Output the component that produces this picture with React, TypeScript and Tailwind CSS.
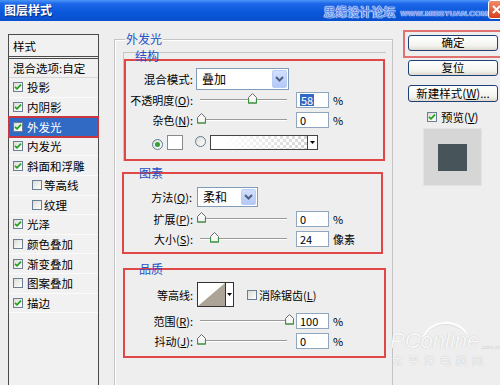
import React from "react";

function Check({ checked }: { checked: boolean }) {
  return (
    <span className="inline-flex w-[10px] h-[10px] shrink-0 items-center justify-center border border-[#6a7f94] bg-[linear-gradient(135deg,#dcdcd6,#ffffff)]">
      {checked && (
        <svg width="8" height="8" viewBox="0 0 8 8">
          <path d="M1 3.8 L3 5.8 L7 1.6" stroke="#21a121" strokeWidth="1.7" fill="none" />
        </svg>
      )}
    </span>
  );
}

function Radio({ on }: { on: boolean }) {
  return (
    <span className="inline-flex w-[11px] h-[11px] shrink-0 rounded-full border border-[#5e7a94] bg-[linear-gradient(135deg,#dcdcd6,#ffffff)] items-center justify-center">
      {on && <span className="w-[5px] h-[5px] rounded-full bg-[#35a035]" />}
    </span>
  );
}

function Thumb({ pos }: { pos: number }) {
  return (
    <svg className="absolute top-[3px]" style={{ left: pos - 4 }} width="9" height="11" viewBox="0 0 9 11">
      <polygon points="0.5,4.5 4.5,0.5 8.5,4.5 8.5,10 0.5,10" fill="#f6f6f6" stroke="#6b6b6b" strokeWidth="1" />
      <polyline points="0.5,6 0.5,10 8.5,10 8.5,6" fill="none" stroke="#2f9a2f" strokeWidth="1.2" />
    </svg>
  );
}

function Slider({ pos }: { pos: number }) {
  return (
    <div className="relative w-[87px] h-[20px] shrink-0">
      <div className="absolute left-0 right-0 top-[9px] h-[2px] border-t border-[#9a9a9a] bg-white" />
      <Thumb pos={pos} />
    </div>
  );
}

function NumBox({ v, hi }: { v: string; hi?: boolean }) {
  return (
    <div className="ml-[9px] w-[33px] h-[16px] shrink-0 border border-[#8fa6bd] bg-white flex items-center pl-[3px] leading-[12px]">
      {hi ? <span className="bg-[#316ac5] text-white px-[1px]">{v}</span> : <span>{v}</span>}
    </div>
  );
}

function U({ c }: { c: string }) {
  return <span className="underline">{c}</span>;
}

function SliderRow({
  label,
  lw,
  pos,
  v,
  unit,
  hi,
}: {
  label: React.ReactNode;
  lw: string;
  pos: number;
  v: string;
  unit: string;
  hi?: boolean;
}) {
  return (
    <div className="flex items-center h-[20px]">
      <div className={`${lw} text-right shrink-0 whitespace-nowrap`}>{label}</div>
      <div className="ml-[7px]">
        <Slider pos={pos} />
      </div>
      <NumBox v={v} hi={hi} />
      <span className="ml-[4px] whitespace-nowrap">{unit}</span>
    </div>
  );
}

function Chevron() {
  return (
    <svg width="9" height="6" viewBox="0 0 9 6">
      <polyline points="1,1 4.5,4.5 8,1" fill="none" stroke="#4d6185" strokeWidth="2" />
    </svg>
  );
}

function Select({ text, w, h }: { text: string; w: string; h: string }) {
  return (
    <div className={`${w} ${h} shrink-0 flex border border-[#7f9db9] bg-white`}>
      <div className="flex-1 flex items-center pl-[5px] text-[12px]">{text}</div>
      <div className="w-[15px] m-[1px] rounded-[2px] border border-[#b9cdf6] bg-[linear-gradient(#d3e0fd,#b3c8f6)] flex items-center justify-center">
        <Chevron />
      </div>
    </div>
  );
}

function TinyArrow() {
  return (
    <svg width="5" height="3" viewBox="0 0 5 3">
      <polygon points="0,0 5,0 2.5,3" fill="#000" />
    </svg>
  );
}

function Btn({ children, h }: { children: React.ReactNode; h: string }) {
  return (
    <div
      className={`w-[90px] ${h} rounded-[3px] border border-[#1f3f7a] bg-[linear-gradient(#ffffff,#f3f3ee_70%,#dcd8cc)] flex items-center justify-center text-[11.5px] leading-none whitespace-nowrap`}
    >
      {children}
    </div>
  );
}

const listItems = [
  { t: "投影", c: true },
  { t: "内阴影", c: true },
  { t: "外发光", c: true, sel: true },
  { t: "内发光", c: true },
  { t: "斜面和浮雕", c: true },
  { t: "等高线", c: false, ind: true },
  { t: "纹理", c: false, ind: true },
  { t: "光泽", c: true },
  { t: "颜色叠加", c: false },
  { t: "渐变叠加", c: true },
  { t: "图案叠加", c: false },
  { t: "描边", c: true },
];

export default function App() {
  return (
    <div className="w-[500px] h-[385px] overflow-hidden relative bg-[#eeeeee] flex flex-col text-[11px] leading-[14px] text-black font-['Noto_Sans_CJK_SC','Noto_Sans',sans-serif]">
      {/* Title bar */}
      <div className="h-[21px] shrink-0 flex items-start bg-[linear-gradient(to_bottom,#4a95f7_0%,#1d66e8_18%,#0a57da_60%,#0a4fce_100%)]">
        <div className="pl-[4px] pt-[3px] text-white font-bold text-[12px] [text-shadow:1px_1px_0_#0a2a80]">图层样式</div>
        <div className="flex-1" />
        <div className="flex items-end h-[20px] pb-[1px]">
          <span className="text-[12px] leading-[14px] font-bold text-[#5a8cf0] [text-shadow:0_0_1px_#fff,0_0_1px_#fff,0_0_1px_#fff]">思缘设计论坛</span>
          <span className="ml-[5px] mb-[1px] text-[8px] leading-[9px] font-bold text-[#5a8cf0] font-['Liberation_Sans',sans-serif] [text-shadow:0_0_1px_#fff,0_0_1px_#fff]">
            WWW.MISSYUAN.COM
          </span>
        </div>
        <div className="w-[17px] h-[19px] shrink-0 mr-[-5px] rounded-[3px] border border-white bg-[linear-gradient(#f08a6a,#d9401c)] flex items-center justify-center">
          <svg width="9" height="9" viewBox="0 0 9 9">
            <path d="M1 1 L8 8 M8 1 L1 8" stroke="#fff" strokeWidth="2" />
          </svg>
        </div>
      </div>

      {/* Body */}
      <div className="flex flex-1 min-h-0">
        {/* Left styles list */}
        <div className="ml-[8px] mt-[13px] w-[91px] shrink-0 border-x border-t border-[#4a4a4a] bg-[#f1f1f1] flex flex-col">
          <div className="h-[21px] flex items-center pl-[4px] text-[11.5px]">样式</div>
          <div className="h-[3px] border-y border-[#4a4a4a]" />
          <div className="h-[19px] flex items-center pl-[4px] border-b border-[#d8d8d8] whitespace-nowrap text-[11.5px]">混合选项:自定</div>
          {listItems.map((it) => (
            <div
              key={it.t}
              className={`h-[19.6px] flex items-center whitespace-nowrap text-[11.5px] ${
                it.sel
                  ? "bg-[#316ac5] text-white outline-2 outline-[#c8363e] -outline-offset-1"
                  : "border-b border-[#fbfbfb]"
              } ${it.ind ? "pl-[23px]" : "pl-[4px]"}`}
            >
              <Check checked={it.c} />
              <span className={it.ind ? "ml-[2px]" : "ml-[4px]"}>{it.t}</span>
            </div>
          ))}
        </div>

        {/* Main frame 外发光 */}
        <div className="ml-[15px] mt-[18px] w-[279px] shrink-0 relative border-l border-t border-r border-[#c4c4c4] [box-shadow:inset_1px_1px_0_#fff]">
          <div className="absolute left-[10px] top-[-9px] px-[1px] bg-[#eeeeee] text-[#2451c8] text-[12px] leading-[15px]">外发光</div>

          {/* 结构 */}
          <div className="mt-[12px] ml-[8px] w-[263px] relative border-l border-t border-[#c4c4c4]">
            <div className="absolute left-[10px] top-[-4px] z-10 px-[1px] text-[#2451c8] text-[12px] leading-[13px]">结构</div>
            <div className="mt-[6px] w-[261px] h-[102px] border-2 border-[#e04848] flex flex-col">
              <div className="mt-[7px] h-[22px] flex items-center">
                <div className="w-[67px] text-right text-[11.5px]">混合模式:</div>
                <div className="ml-[3px]">
                  <Select text="叠加" w="w-[93px]" h="h-[22px]" />
                </div>
              </div>
              <SliderRow label={<>不透明度(<U c="O" />):</>} lw="w-[67px]" pos={52} v="58" unit="%" hi />
              <SliderRow label={<>杂色(<U c="N" />):</>} lw="w-[67px]" pos={1} v="0" unit="%" />
              <div className="mt-[2px] h-[20px] flex items-center">
                <div className="ml-[26px]">
                  <Radio on />
                </div>
                <div className="ml-[4px] w-[16px] h-[15px] border border-[#8a8a8a] bg-white" />
                <div className="ml-[12px]">
                  <Radio on={false} />
                </div>
                <div className="ml-[4px] w-[108px] h-[15px] border border-[#444] flex">
                  <div className="flex-1 [background:linear-gradient(to_right,#fff_15%,rgba(255,255,255,0))_0_0/100%_100%,repeating-conic-gradient(#d4d4d4_0_25%,#ffffff_0_50%)_0_0/6px_6px]" />
                  <div className="w-[10px] border-l border-[#444] bg-white flex items-center justify-center">
                    <TinyArrow />
                  </div>
                </div>
              </div>
            </div>
          </div>

          {/* 图素 */}
          <div className="mt-[11px] ml-[7px] w-[261px] h-[82px] relative border-2 border-[#e04848] flex flex-col">
            <div className="absolute left-[15px] top-[-8px] text-[#2451c8] text-[12px] leading-[14px]">图素</div>
            <div className="mt-[13px] h-[20px] flex items-center">
              <div className="w-[68px] text-right whitespace-nowrap">方法(<U c="Q" />):</div>
              <div className="ml-[5px]">
                <Select text="柔和" w="w-[61px]" h="h-[20px]" />
              </div>
            </div>
            <div className="mt-[2px]">
              <SliderRow label={<>扩展(<U c="P" />):</>} lw="w-[69px]" pos={1} v="0" unit="%" />
            </div>
            <SliderRow label={<>大小(<U c="S" />):</>} lw="w-[69px]" pos={14} v="24" unit="像素" />
          </div>

          {/* 品质 */}
          <div className="mt-[14px] ml-[8px] w-[263px] h-[90px] relative border-2 border-[#e04848] flex flex-col">
            <div className="absolute left-[14px] top-[-8px] text-[#2451c8] text-[12px] leading-[14px]">品质</div>
            <div className="mt-[12px] h-[25px] flex items-center">
              <div className="w-[68px] text-right">等高线:</div>
              <div className="ml-[4px] w-[37px] h-[25px] border border-[#333] flex bg-white">
                <svg width="27" height="23" viewBox="0 0 27 23" className="shrink-0">
                  <polygon points="0,23 27,0 27,23" fill="#aca597" />
                </svg>
                <div className="flex-1 border-l border-[#333] flex items-center justify-center">
                  <TinyArrow />
                </div>
              </div>
              <div className="ml-[13px]">
                <Check checked={false} />
              </div>
              <span className="ml-[2px] whitespace-nowrap">
                消除锯齿(<U c="L" />)
              </span>
            </div>
            <div className="mt-[4px]">
              <SliderRow label={<>范围(<U c="R" />):</>} lw="w-[68px]" pos={89} v="100" unit="%" />
            </div>
            <SliderRow label={<>抖动(<U c="J" />):</>} lw="w-[68px]" pos={1} v="0" unit="%" />
          </div>
        </div>

        {/* Right column */}
        <div className="ml-[10px] flex-1 flex flex-col">
          <div className="mt-[9px] w-[100px] h-[28px] shrink-0 border-2 border-[#e27272] pl-[3px] pt-[3px]">
            <Btn h="h-[16px]">确定</Btn>
          </div>
          <div className="mt-[2px] ml-[5px]">
            <Btn h="h-[16px]">复位</Btn>
          </div>
          <div className="mt-[9px] ml-[5px]">
            <Btn h="h-[17px]">
              新建样式(<U c="W" />)...
            </Btn>
          </div>
          <div className="mt-[10px] ml-[24px] h-[10px] flex items-center whitespace-nowrap">
            <Check checked />
            <span className="ml-[4px] text-[11.5px]">
              预览(<U c="V" />)
            </span>
          </div>
          <div className="mt-[6px] ml-[20px] w-[59px] h-[58px] bg-[#d6d6d6] border border-[#e4e4e4] flex items-center justify-center">
            <div className="w-[29px] h-[27px] bg-[#475459]" />
          </div>
        </div>
      </div>

      {/* PConline watermark */}
      <div className="absolute left-[390px] top-[318px] w-[110px] h-[55px] pointer-events-none">
        <svg className="absolute left-[30px] top-[2px]" width="50" height="22" viewBox="0 0 50 22">
          <path d="M4 20 A22 18 0 0 1 46 14" fill="none" stroke="#ffffff" strokeWidth="3" opacity="0.9" />
          <path d="M4 21 A22 18 0 0 1 46 15" fill="none" stroke="#d4d4d4" strokeWidth="1" opacity="0.8" />
        </svg>
        <div className="absolute left-[0px] top-[12px] flex items-end">
          <span className="italic text-[22px] leading-[22px] text-[#f7f7f7] font-['Liberation_Sans',sans-serif] [text-shadow:0_0_1px_#b8b8b8]">PConline</span>
          <span className="ml-[1px] mb-[2px] text-[6px] leading-[6px] text-[#cfcfcf] font-['Liberation_Sans',sans-serif]">.com.cn</span>
        </div>
        <div className="absolute left-[2px] top-[36px] text-[11px] leading-[12px] tracking-[5px] text-[#f8f8f8] [text-shadow:0_0_1px_#b0b0b0] whitespace-nowrap">太平洋电脑网</div>
      </div>
    </div>
  );
}
